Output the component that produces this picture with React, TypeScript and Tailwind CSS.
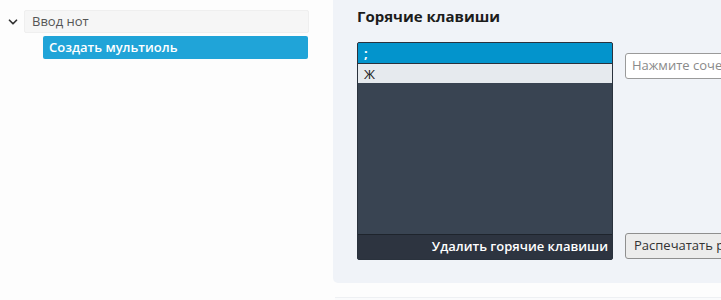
import { ChevronDown } from 'lucide-react'

const font = { fontFamily: '"Open Sans", "Noto Sans", sans-serif' }

export default function App() {
  return (
    <div className="flex w-[721px] h-[300px] bg-[#fdfdfd] overflow-hidden" style={font}>
      {/* дерево команд */}
      <div className="w-[333px] shrink-0 pt-[10px] pl-[5px]">
        <div className="flex items-center">
          <ChevronDown size={14} strokeWidth={3} className="text-[#333] ml-[1px] mr-[4px]" />
          <div className="w-[285px] h-[23px] flex items-center px-[7px] bg-[#f6f6f6] border border-[#efefef] rounded-[2px] text-[13px] text-[#555]">
            Ввод нот
          </div>
        </div>
        <div className="ml-[38px] mt-[3px] w-[265px] h-[23px] flex items-center px-[6px] bg-[#20a4d8] rounded-[2px] text-[13px] font-semibold text-white">
          Создать мультиоль
        </div>
      </div>

      {/* горячие клавиши */}
      <div className="flex-1 flex flex-col">
        <div className="h-[283px] shrink-0 bg-[#f0f3f8] rounded-bl-[5px] pl-[24px] pt-[6px]">
          <h2 className="text-[15px] font-bold text-[#1c1c1c] leading-[20px]">Горячие клавиши</h2>
          <div className="flex mt-[16px]">
            <div className="w-[256px] h-[218px] flex flex-col bg-[#394452] border border-[#2a323d] rounded-[2px] overflow-hidden">
              <div className="h-[20px] bg-[#0394cc] text-white text-[13px] font-bold px-[6px] leading-[20px]">;</div>
              <div className="h-[20px] bg-[#e6eaee] text-[#222] text-[13px] px-[6px] leading-[20px] border-t border-[#2a323d]">Ж</div>
              <div className="flex-1" />
              <div className="h-[25px] bg-[#2d3440] border-t border-[#1e242c] flex items-center justify-end pr-[4px] text-white text-[13px] font-semibold">
                Удалить горячие клавиши
              </div>
            </div>
            <div className="flex flex-col justify-between ml-[12px] pt-[11px] pb-[1px]">
              <div className="w-[120px] h-[26px] bg-white border border-[#9a9a9a] rounded-[3px] flex items-center px-[6px] text-[13px] text-[#8a8a8a] whitespace-nowrap overflow-hidden">
                Нажмите сочетание
              </div>
              <div className="w-[120px] h-[26px] bg-[#ececec] border border-[#8f8f8f] rounded-[3px] flex items-center px-[8px] text-[13px] text-[#333] whitespace-nowrap overflow-hidden">
                Распечатать раскладку
              </div>
            </div>
          </div>
        </div>
        <div className="mt-[14px] ml-[2px] h-[10px] shrink-0 border-t border-[#eef0f3] bg-[#fafbfc]" />
      </div>
    </div>
  )
}
